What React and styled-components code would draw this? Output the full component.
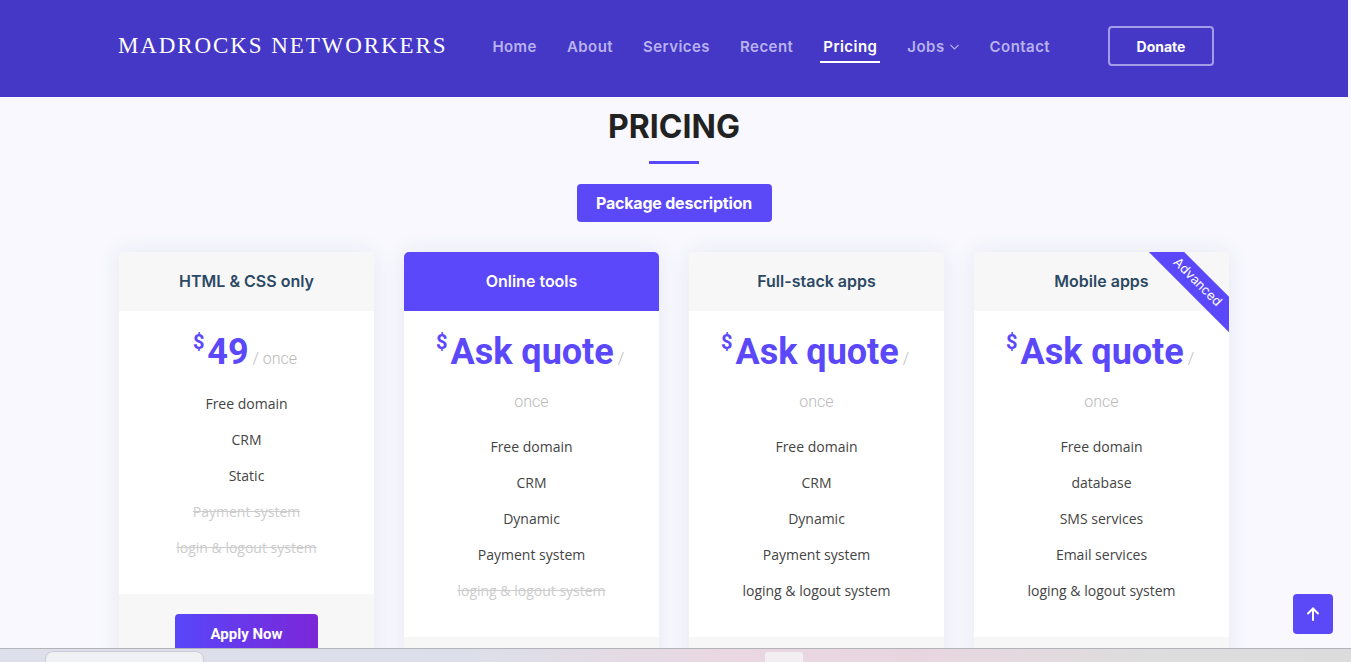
import React from 'react';
import styled, { createGlobalStyle } from 'styled-components';

const GlobalStyle = createGlobalStyle`
	html, body {
		overflow: hidden;
	}
	body {
		margin: 0 3px 0 0;
		background: #f8f8fe;
		font-family: 'Open Sans', sans-serif;
	}
`;

const Header = styled.header`
	height: 97px;
	box-sizing: border-box;
	padding-top: 26px;
	background: #4638c7;
`;
const HeaderInner = styled.div`
	width: 1112px;
	margin: 0 auto;
	height: 40px;
	display: flex;
	align-items: center;
`;
const Logo = styled.div`
	font-family: 'Liberation Serif', serif;
	font-size: 23px;
	letter-spacing: 1.9px;
	color: #fff;
	white-space: nowrap;
`;
const Nav = styled.nav`
	display: flex;
	align-items: center;
	gap: 30px;
	margin-left: 45px;
`;
const NavLink = styled.a`
	position: relative;
	display: flex;
	align-items: center;
	gap: 4px;
	height: 40px;
	font-family: Inter, sans-serif;
	font-weight: 600;
	font-size: 15px;
	letter-spacing: 0.45px;
	color: ${(p) => (p.$active ? '#fff' : '#b8b2ee')};
	white-space: nowrap;
	&::after {
		content: '';
		display: ${(p) => (p.$active ? 'block' : 'none')};
		position: absolute;
		left: -3px;
		right: -3px;
		bottom: 3px;
		height: 2px;
		background: #fff;
	}
`;
const Donate = styled.a`
	margin-left: auto;
	margin-right: 16px;
	width: 106px;
	height: 40px;
	box-sizing: border-box;
	display: flex;
	align-items: center;
	justify-content: center;
	border: 2px solid #a39ce6;
	border-radius: 4px;
	font-family: Inter, sans-serif;
	font-weight: 700;
	font-size: 14px;
	color: #fff;
`;

const Section = styled.section`
	padding-top: 11px;
`;
const Title = styled.h2`
	margin: 0;
	text-align: center;
	font-family: Inter, sans-serif;
	font-weight: 700;
	font-size: 32px;
	line-height: 38px;
	color: #222;
`;
const Bar = styled.div`
	width: 50px;
	height: 3px;
	margin: 15px auto 20px;
	background: #5a48fa;
`;
const PillRow = styled.div`
	display: flex;
	justify-content: center;
`;
const Pill = styled.div`
	width: 195px;
	height: 38px;
	line-height: 38px;
	text-align: center;
	border-radius: 4px;
	background: #5b48f7;
	color: #fff;
	font-family: Inter, sans-serif;
	font-weight: 700;
	font-size: 16px;
	letter-spacing: -0.2px;
`;

const Grid = styled.div`
	width: 1110px;
	margin: 30px auto 0;
	display: grid;
	grid-template-columns: repeat(4, 255px);
	gap: 30px;
	align-items: start;
`;
const Card = styled.div`
	position: relative;
	overflow: hidden;
	background: #fff;
	border-radius: 5px;
	text-align: center;
	box-shadow: 0 0 24px rgba(50, 40, 130, 0.08);
`;
const CardHead = styled.h3`
	margin: 0;
	padding: 20px 15px;
	font-family: Inter, sans-serif;
	font-weight: 600;
	font-size: 16px;
	line-height: 19px;
	background: ${(p) => (p.$featured ? '#5a48fa' : '#f7f7f8')};
	color: ${(p) => (p.$featured ? '#fff' : '#2c4964')};
`;
const CardBody = styled.div`
	padding: 20px 20px 0;
`;
const Price = styled.h4`
	margin: 0 0 20px;
	font-family: Roboto, sans-serif;
	font-weight: 700;
	font-size: 36px;
	line-height: 1.2;
	color: #5a48fa;
`;
const Dollar = styled.sup`
	position: relative;
	top: -15px;
	left: -3px;
	vertical-align: baseline;
	font-size: 20px;
`;
const Per = styled.span`
	font-size: 16px;
	font-weight: 300;
	color: #bababa;
`;
const Features = styled.ul`
	list-style: none;
	margin: 0;
	padding: 0;
	font-family: 'Open Sans', sans-serif;
	font-size: 14px;
	line-height: 20px;
	color: #444;
`;
const Feature = styled.li`
	padding-bottom: 16px;
	color: ${(p) => (p.$na ? '#ccc' : '#444')};
	text-decoration: ${(p) => (p.$na ? 'line-through' : 'none')};
`;
const CardFoot = styled.div`
	margin-top: 20px;
	padding: 20px 15px;
	background: #f7f7f8;
`;
const ApplyButton = styled.a`
	display: inline-block;
	padding: 10px 35px;
	border-radius: 4px;
	background: linear-gradient(90deg, #5846f9 0%, #7b27d8 100%);
	color: #fff;
	font-family: Roboto, sans-serif;
	font-weight: 700;
	font-size: 15px;
	line-height: 21px;
`;
const Ribbon = styled.span`
	position: absolute;
	top: 18px;
	right: -68px;
	width: 200px;
	padding: 1px 0 3px;
	transform: rotate(45deg);
	z-index: 1;
	background: #5a48fa;
	color: #fff;
	font-family: Inter, sans-serif;
	font-size: 13px;
	line-height: 21px;
`;

const BackToTop = styled.a`
	position: fixed;
	right: 18px;
	bottom: 28px;
	width: 40px;
	height: 40px;
	display: flex;
	align-items: center;
	justify-content: center;
	border-radius: 4px;
	background: #5b48f7;
`;
const Taskbar = styled.div`
	position: fixed;
	left: 0;
	right: 0;
	bottom: 0;
	height: 13px;
	border-top: 1px solid #b3b4ba;
	background: linear-gradient(90deg, #dde0ea 0%, #dcdfe9 35%, #ead7e1 55%, #e8d6df 68%, #dddddd 85%, #dcdcdc 100%);
`;
const SearchPill = styled.div`
	position: absolute;
	left: 45px;
	top: 2px;
	width: 157px;
	height: 16px;
	border-radius: 8px;
	background: #f0f1f5;
	border: 1px solid #c9ccd6;
`;
const TaskTile = styled.div`
	position: absolute;
	left: 765px;
	top: 3px;
	width: 38px;
	height: 14px;
	border-radius: 3px;
	background: #f2eef1;
`;

const plans = [
	{
		name: 'HTML & CSS only',
		price: '49',
		features: [
			['Free domain'],
			['CRM'],
			['Static'],
			['Payment system', true],
			['login & logout system', true],
		],
	},
	{
		name: 'Online tools',
		featured: true,
		price: 'Ask quote',
		features: [
			['Free domain'],
			['CRM'],
			['Dynamic'],
			['Payment system'],
			['loging & logout system', true],
		],
	},
	{
		name: 'Full-stack apps',
		price: 'Ask quote',
		features: [
			['Free domain'],
			['CRM'],
			['Dynamic'],
			['Payment system'],
			['loging & logout system'],
		],
	},
	{
		name: 'Mobile apps',
		advanced: true,
		price: 'Ask quote',
		features: [
			['Free domain'],
			['database'],
			['SMS services'],
			['Email services'],
			['loging & logout system'],
		],
	},
];

const navItems = ['Home', 'About', 'Services', 'Recent', 'Pricing', 'Jobs', 'Contact'];

function App() {
	return (
		<>
			<GlobalStyle />
			<Header>
				<HeaderInner>
					<Logo>MADROCKS NETWORKERS</Logo>
					<Nav>
						{navItems.map((item) => (
							<NavLink key={item} $active={item === 'Pricing'}>
								{item}
								{item === 'Jobs' && (
									<svg width='11' height='11' viewBox='0 0 16 16' fill='none' stroke='#b8b2ee' strokeWidth='1.6'>
										<path d='M2 5.5l6 6 6-6' />
									</svg>
								)}
							</NavLink>
						))}
					</Nav>
					<Donate>Donate</Donate>
				</HeaderInner>
			</Header>

			<Section>
				<Title>PRICING</Title>
				<Bar />
				<PillRow>
					<Pill>Package description</Pill>
				</PillRow>

				<Grid>
					{plans.map((plan) => (
						<Card key={plan.name}>
							{plan.advanced && <Ribbon>Advanced</Ribbon>}
							<CardHead $featured={plan.featured}>{plan.name}</CardHead>
							<CardBody>
								<Price>
									<Dollar>$</Dollar>
									{plan.price}
									<Per> / once</Per>
								</Price>
								<Features>
									{plan.features.map(([text, na]) => (
										<Feature key={text} $na={na}>
											{text}
										</Feature>
									))}
								</Features>
							</CardBody>
							<CardFoot>
								<ApplyButton>Apply Now</ApplyButton>
							</CardFoot>
						</Card>
					))}
				</Grid>
			</Section>

			<BackToTop>
				<svg width='20' height='20' viewBox='0 0 20 20' fill='none' stroke='#fff' strokeWidth='2' strokeLinecap='round' strokeLinejoin='round'>
					<path d='M10 16V4.5' />
					<path d='M5 9.5l5-5 5 5' />
				</svg>
			</BackToTop>
			<Taskbar>
				<SearchPill />
				<TaskTile />
			</Taskbar>
		</>
	);
}

export default App;
